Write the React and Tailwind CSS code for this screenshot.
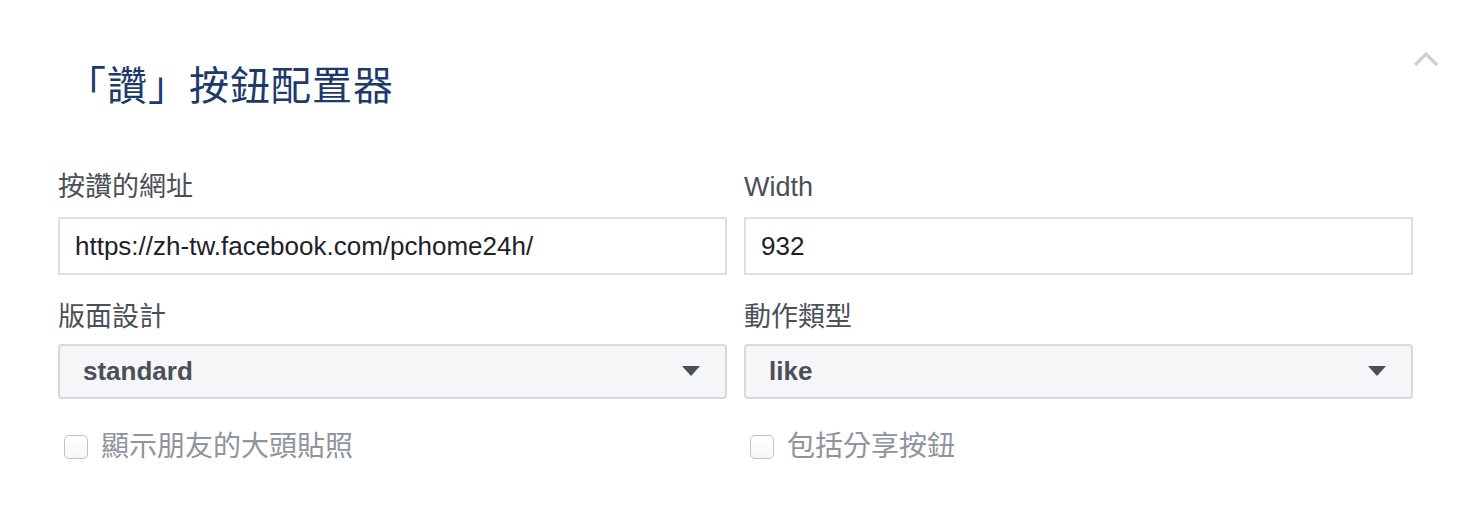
import { useState } from 'react';

const font = { fontFamily: '"Liberation Sans", "Noto Sans CJK TC", sans-serif' };

function Field({ label, children }) {
  return (
    <div className="flex flex-col">
      <label className="text-[27px] leading-[26px] text-[#4b4f56] mb-[17px]">{label}</label>
      {children}
    </div>
  );
}

function Select({ value }) {
  return (
    <div className="h-[55px] flex items-center justify-between pl-[23px] pr-[24px] bg-[#f5f6f7] border-2 border-[#d5d8dc] rounded-[4px]">
      <span className="text-[26px] font-bold text-[#4b4f56]">{value}</span>
      <svg width="20" height="11" viewBox="0 0 20 11">
        <path d="M1 0 H19 L10 10 Z" fill="#4b4f56" />
      </svg>
    </div>
  );
}

function Check({ label }) {
  const [on, setOn] = useState(false);
  return (
    <button onClick={() => setOn(!on)} className="flex items-center gap-[13px] pl-[6px] text-left">
      <span className="w-[24px] h-[24px] rounded-[5px] border border-[#bec3c9] bg-gradient-to-b from-white to-[#f5f6f7] flex items-center justify-center">
        {on && <span className="w-[12px] h-[12px] bg-[#4b4f56] rounded-[2px]" />}
      </span>
      <span className="text-[28px] leading-[28px] text-[#90949c]">{label}</span>
    </button>
  );
}

export default function App() {
  return (
    <div className="relative w-[1472px] h-[510px] bg-white pt-[66px] pl-[58px] pr-[59px]" style={font}>
      {/* collapse */}
      <svg className="absolute left-[1413px] top-[51px]" width="26" height="16" viewBox="0 0 26 16">
        <path d="M2 14 L13 3 L24 14" fill="none" stroke="#ccd0d5" strokeWidth="3.2" />
      </svg>

      <h1 className="text-[40px] leading-[40px] text-[#1d3a6a] pl-[8px] tracking-[1px]">「讚」按鈕配置器</h1>

      <div className="grid grid-cols-2 gap-x-[17px] mt-[68px]">
        <Field label="按讚的網址">
          <input
            defaultValue="https://zh-tw.facebook.com/pchome24h/"
            className="h-[58px] px-[15px] border-2 border-[#dddfe2] text-[26px] text-[#1d2129] outline-none"
            style={font}
          />
        </Field>
        <Field label="Width">
          <input
            defaultValue="932"
            className="h-[58px] px-[15px] border-2 border-[#dddfe2] text-[26px] text-[#1d2129] outline-none"
            style={font}
          />
        </Field>

        <div className="mt-[29px]">
          <Field label="版面設計">
            <div className="-mt-[3px]"><Select value="standard" /></div>
          </Field>
        </div>
        <div className="mt-[29px]">
          <Field label="動作類型">
            <div className="-mt-[3px]"><Select value="like" /></div>
          </Field>
        </div>

        <div className="mt-[34px]"><Check label="顯示朋友的大頭貼照" /></div>
        <div className="mt-[34px]"><Check label="包括分享按鈕" /></div>
      </div>
    </div>
  );
}
